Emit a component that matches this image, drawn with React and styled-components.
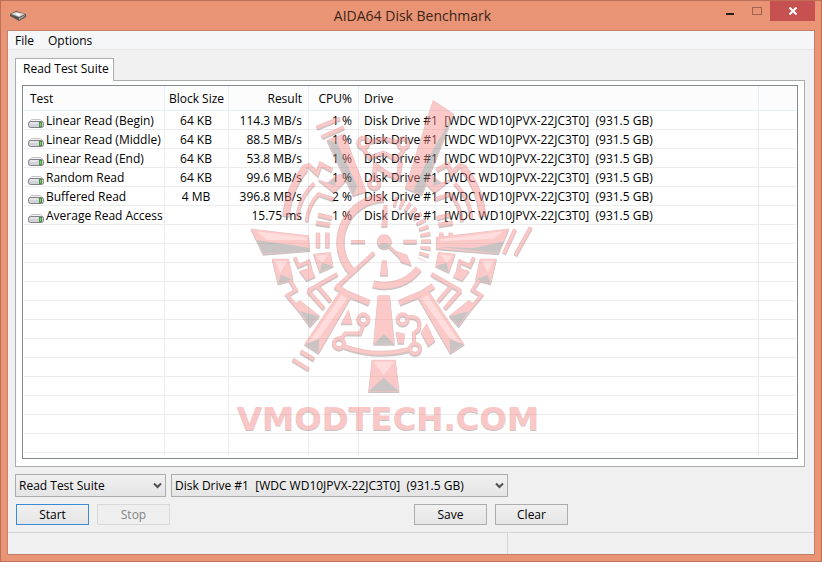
import React from 'react';
import styled, { createGlobalStyle } from 'styled-components';

const DISK = 'Disk Drive #1\u00a0 [WDC WD10JPVX-22JC3T0]\u00a0 (931.5 GB)';

const rows = [
  { test: 'Linear Read (Begin)', block: '64 KB', result: '114.3 MB/s', cpu: '1 %' },
  { test: 'Linear Read (Middle)', block: '64 KB', result: '88.5 MB/s', cpu: '1 %' },
  { test: 'Linear Read (End)', block: '64 KB', result: '53.8 MB/s', cpu: '1 %' },
  { test: 'Random Read', block: '64 KB', result: '99.6 MB/s', cpu: '1 %' },
  { test: 'Buffered Read', block: '4 MB', result: '396.8 MB/s', cpu: '2 %' },
  { test: 'Average Read Access', block: '', result: '15.75 ms', cpu: '1 %' },
];

const columns = [141, 64, 80, 50, 400];

// vertical grid lines run below the last row, so they are painted on the list
const columnLines = columns
  .map((width, i) => columns.slice(0, i).reduce((a, b) => a + b, width))
  .map((end) => `linear-gradient(#ececec, #ececec) ${end - 1}px 0 / 1px 100% no-repeat`)
  .join(', ');

// watermark parts, every "side" part is drawn again mirrored
const sidePolys = [
  '98,520 145,520 158,580 115,592',
  '222,505 270,500 278,540 240,557',
  '162,655 180,645 237,690 210,720',
  '300,618 330,636 235,800 195,775',
  '236,282 262,292 288,270 314,262 316,284 282,318',
  '180,556 212,546 224,572 200,582',
];

const sideBars = [
  { d: 'M138 390 Q146 306 196 246', w: 22 },
  { d: 'M188 244 L206 238 L232 262 L242 234 L276 252', w: 13 },
  { d: 'M172 398 Q176 336 222 292', w: 11 },
  { d: 'M200 406 Q204 356 236 324 L282 340', w: 11 },
  { d: 'M234 386 L276 396', w: 13 },
  { d: 'M228 410 L270 416', w: 13 },
  { d: 'M234 440 L234 484', w: 13 },
  { d: 'M262 440 L262 484', w: 13 },
  { d: 'M148 580 L168 612 L142 628 L172 664', w: 11 },
  { d: 'M164 514 L176 540 L206 526 L212 552', w: 11 },
  { d: 'M204 614 L292 564', w: 12 },
  { d: 'M204 614 L252 668', w: 12 },
  { d: 'M234 602 L272 646', w: 12 },
  { d: 'M286 600 L320 622 L388 650', w: 18 },
];

const polys = [
  '35,430 205,450 208,492 70,503',
  '590,455 805,430 775,502 590,487',
  '262,163 312,145 377,315 340,327',
  '580,45 640,85 545,325 497,305',
  '415,630 448,630 462,773 402,773',
  '397,823 465,823 476,915 387,915',
  '325,675 335,712 305,712',
  '470,740 492,744 490,770 475,770',
  '545,740 560,715 583,765 565,778',
  '472,498 500,508 512,536 484,526',
  '428,525 438,525 442,566 422,566',
  '433,360 440,360 440,420 426,420',
];

const bars = [
  { d: 'M230 125 L300 97', w: 12 },
  { d: 'M245 153 L312 124', w: 12 },
  { d: 'M825 430 L792 502', w: 12 },
  { d: 'M872 424 L826 507', w: 12 },
  { d: 'M182 796 L222 820', w: 12 },
  { d: 'M158 820 L206 850', w: 12 },
  { d: 'M432 336 A132 132 0 0 0 335 556', w: 24 },
  { d: 'M402 500 L292 602', w: 12 },
  { d: 'M400 594 A128 128 0 0 0 536 548', w: 22 },
  { d: 'M333 467 L375 467', w: 10 },
  { d: 'M490 467 L530 467', w: 12 },
  { d: 'M440 474 L484 516', w: 9 },
  { d: 'M370 188 L388 214 L430 200 L470 220 L492 190', w: 12 },
  { d: 'M386 168 L430 158 L474 168', w: 12 },
  { d: 'M403 274 L406 236 L440 262 L474 276 L482 226', w: 14 },
  { d: 'M370 718 L360 742 L316 742 L302 758', w: 11 },
  { d: 'M314 782 Q410 816 508 790', w: 14 },
  { d: 'M506 692 Q546 690 536 730 L522 742 L522 770', w: 12 },
];

const rings = [
  [370, 170],
  [490, 172],
  [403, 292],
  [370, 700],
  [297, 772],
  [488, 700],
  [525, 788],
];

const facets = [
  '50,462 160,478 208,486 208,494 70,503',
  '590,482 700,486 792,466 775,502',
  '262,163 290,168 352,300 340,327',
  '640,85 560,225 520,314 545,325',
  '402,773 432,745 462,773',
  '387,915 431,875 476,915',
  '195,775 238,760 235,800',
  '671,775 628,760 631,800',
  '115,592 122,566 158,580',
  '751,592 744,566 708,580',
  '240,557 246,530 278,540',
  '626,557 620,530 588,540',
  '180,676 237,690 210,720',
  '686,676 629,690 656,720',
  '240,284 262,294 288,272 286,300',
  '626,284 604,294 578,272 580,300',
];

const highlights = [
  '50,436 200,454 200,462 80,462',
  '790,436 600,460 600,466 760,458',
  '400,827 462,827 431,868',
  '104,524 141,524 122,560',
  '762,524 725,524 744,560',
  '227,509 266,505 246,530',
  '639,509 600,505 620,530',
  '304,628 320,638 238,755 206,770',
  '562,628 546,638 628,755 660,770',
];

const Shapes = ({ polyList, barList, tone, inset }) => (
  <>
    {polyList.map((points) => (
      <polygon key={points} points={points} fill={tone} stroke={tone} strokeWidth={inset ? 0 : 4} />
    ))}
    {barList.map(({ d, w }) => (
      <path key={d} d={d} fill="none" stroke={tone} strokeWidth={w - inset} />
    ))}
  </>
);

const Layer = ({ tone, inset = 0, dy = 0 }) => (
  <g transform={`translate(0 ${dy})`}>
    <Shapes polyList={polys} barList={bars} tone={tone} inset={inset} />
    <Shapes polyList={sidePolys} barList={sideBars} tone={tone} inset={inset} />
    <g transform="translate(866 0) scale(-1 1)">
      <Shapes polyList={sidePolys} barList={sideBars} tone={tone} inset={inset} />
    </g>
    <path
      d="M462 346 A124 124 0 0 1 546 520"
      fill="none"
      stroke={tone}
      strokeWidth={30 - inset}
      strokeDasharray="9 11"
    />
    {rings.map(([x, y]) => (
      <circle key={`${x}-${y}`} cx={x} cy={y} r="15" fill="none" stroke={tone} strokeWidth={12 - inset} />
    ))}
    <circle cx="433" cy="467" r={22 - inset / 2} fill={tone} />
  </g>
);

const Logo = () => (
  <Watermark viewBox="-15 0 930 1050" aria-hidden="true">
    <Layer tone="#8c7c7c" dy={4} />
    <Layer tone="#dd7a7a" />
    <Layer tone="#fa8a8a" inset={6} />
    {facets.map((points) => (
      <polygon key={points} points={points} fill="#8a8080" />
    ))}
    {highlights.map((points) => (
      <polygon key={points} points={points} fill="#ffb4b4" />
    ))}
    <ellipse cx="433" cy="479" rx="17" ry="8" fill="#8a8080" />
    <WatermarkText x="-9" y="1036" fill="#857c7c">VMODTECH.COM</WatermarkText>
    <WatermarkText x="-9" y="1032" fill="#f58484">VMODTECH.COM</WatermarkText>
  </Watermark>
);

const AppIcon = () => (
  <svg width="16" height="16" viewBox="0 0 16 16" aria-hidden="true">
    <path d="M0 6 L6 3 L16 6 L16 9 L9 13 L0 8Z" fill="#5d5552" />
    <path d="M1 6 L6 4 L15 6 L9 9Z" fill="#d9d7d5" />
    <path d="M5 5 L9 5 L11 7 L8 8Z" fill="#f8f8f8" />
    <path d="M9 10 L15 7 L15 8 L9 12Z" fill="#a8a4a2" />
  </svg>
);

const DriveIcon = () => (
  <svg width="16" height="12" viewBox="0 0 16 12" aria-hidden="true">
    <path d="M3.500 2.500 H12.500 L15 5 H1Z" fill="#f3f3f3" stroke="#c4c4c4" />
    <rect x="0.5" y="4.5" width="15" height="6" rx="2" fill="#d2d2da" stroke="#808086" />
    <path d="M2 6 H10" stroke="#f6f6f8" />
    <rect x="11" y="5" width="3" height="5" fill="#4c9445" />
    <path d="M12.500 6 V9" stroke="#7fd067" />
  </svg>
);

const Chevron = () => (
  <ChevronIcon viewBox="0 0 9 7" aria-hidden="true">
    <path d="M1 1.500 L4.500 5 L8 1.500" fill="none" stroke="#505050" strokeWidth="2" />
  </ChevronIcon>
);

const Combo = ({ label, value, width }) => (
  <ComboBox $width={width}>
    <Select aria-label={label} defaultValue={value}>
      <option>{value}</option>
    </Select>
    <Chevron />
  </ComboBox>
);

const App = () => {
  return (
    <Window>
      <GlobalStyle />
      <TitleBar>
        <AppIcon />
        <Title>AIDA64 Disk Benchmark</Title>
        <WindowControls>
          <ControlButton aria-label="Minimize">
            <svg width="8" height="10" viewBox="0 0 8 10">
              <rect y="7" width="8" height="2" fill="#2b1a14" />
            </svg>
          </ControlButton>
          <ControlButton aria-label="Maximize" disabled>
            <svg width="10" height="8" viewBox="0 0 10 8">
              <rect x="0.5" y="0.5" width="9" height="7" fill="none" stroke="#a0634d" />
            </svg>
          </ControlButton>
          <CloseButton aria-label="Close">
            <svg width="8" height="8" viewBox="0 0 8 8">
              <path d="M0.500 0.500 L7.500 7.500 M7.500 0.500 L0.500 7.500" stroke="#fff" strokeWidth="2" />
            </svg>
          </CloseButton>
        </WindowControls>
      </TitleBar>
      <Client>
        <MenuBar>
          <MenuItem>File</MenuItem>
          <MenuItem>Options</MenuItem>
        </MenuBar>
        <Content>
          <Tab role="tab" aria-selected="true">Read Test Suite</Tab>
          <TabPage>
            <List>
              <Table>
                <colgroup>
                  {columns.map((width, i) => (
                    <Column key={i} $width={width} />
                  ))}
                  <col />
                </colgroup>
                <thead>
                  <tr>
                    <HeadCell $left={6}>Test</HeadCell>
                    <HeadCell $align="center">Block Size</HeadCell>
                    <HeadCell $align="right">Result</HeadCell>
                    <HeadCell $align="right">CPU%</HeadCell>
                    <HeadCell $left={5}>Drive</HeadCell>
                    <HeadCell />
                  </tr>
                </thead>
                <tbody>
                  {rows.map((row) => (
                    <tr key={row.test}>
                      <Cell $left={4}>
                        <TestName>
                          <DriveIcon />
                          {row.test}
                        </TestName>
                      </Cell>
                      <Cell $align="center">{row.block}</Cell>
                      <Cell $align="right">{row.result}</Cell>
                      <Cell $align="right">{row.cpu}</Cell>
                      <Cell $left={5}>{DISK}</Cell>
                      <Cell />
                    </tr>
                  ))}
                </tbody>
              </Table>
              <Logo />
            </List>
          </TabPage>
          <ComboRow>
            <Combo label="Test" value="Read Test Suite" width={151} />
            <Combo label="Drive" value={DISK} width={337} />
          </ComboRow>
          <ButtonRow>
            <ButtonGroup>
              <Button $primary>Start</Button>
              <Button disabled>Stop</Button>
            </ButtonGroup>
            <ButtonGroup>
              <Button>Save</Button>
              <Button>Clear</Button>
            </ButtonGroup>
          </ButtonRow>
        </Content>
        <StatusBar>
          <StatusPane />
        </StatusBar>
      </Client>
    </Window>
  );
}

const GlobalStyle = createGlobalStyle`
  * {
    box-sizing: border-box;
  }

  body {
    margin: 0;
    color: #000;
    font: 12px/16px 'Open Sans', 'Noto Sans', sans-serif;
  }

  button, select {
    font: inherit;
    color: inherit;
  }
`;

const Window = styled.div`
  display: flex;
  flex-direction: column;
  min-height: 100vh;
  padding: 0 6px 6px;
  border: 1px solid #bd6f58;
  background: #e99474;
`;

const TitleBar = styled.header`
  display: grid;
  grid-template-columns: 1fr auto 1fr;
  align-items: center;
  height: 29px;
  padding-left: 3px;
`;

const Title = styled.h1`
  margin: 0;
  color: #3c2419;
  font-size: 14px;
  font-weight: 400;
  line-height: 28px;
`;

const WindowControls = styled.div`
  display: flex;
  align-self: start;
  justify-content: flex-end;
`;

const ControlButton = styled.button`
  display: flex;
  align-items: center;
  justify-content: center;
  width: 27px;
  height: 20px;
  padding: 0;
  border: 0;
  background: none;
`;

const CloseButton = styled(ControlButton)`
  width: 45px;
  background: #c75050;
`;

const Client = styled.main`
  display: flex;
  flex: 1;
  flex-direction: column;
  border: 1px solid #c27f69;
  background: #f0f0f0;
`;

const MenuBar = styled.nav`
  display: flex;
  height: 19px;
  border-bottom: 1px solid #e6e6e6;
  background: #f5f6f7;
`;

const MenuItem = styled.button`
  padding: 2px 7px 0;
  border: 0;
  background: none;
  line-height: 16px;
`;

const Content = styled.div`
  display: flex;
  flex: 1;
  flex-direction: column;
  gap: 7px;
  padding: 8px 9px 7px 7px;
`;

const Tab = styled.button`
  z-index: 1;
  align-self: flex-start;
  height: 23px;
  margin-bottom: -8px;
  padding: 0 4px 2px 7px;
  border: 1px solid #acacac;
  border-bottom: 0;
  background: #fff;
`;

const TabPage = styled.section`
  display: flex;
  flex: 1;
  padding: 4px 6px 7px;
  border: 1px solid #acacac;
  background: #fff;
`;

const List = styled.div`
  position: relative;
  flex: 1;
  min-width: 0;
  padding: 0 1px 2px;
  border: 1px solid #828790;
  background:
    ${columnLines},
    repeating-linear-gradient(transparent 0 18px, #ececec 18px 19px) 0 25px no-repeat;
  background-origin: content-box;
  background-clip: content-box;
`;

const Table = styled.table`
  width: 100%;
  table-layout: fixed;
  border-spacing: 0;
`;

const Column = styled.col`
  width: ${({ $width }) => $width}px;
`;

const HeadCell = styled.th`
  height: 25px;
  padding: 2px 0 0 ${({ $left = 0 }) => $left}px;
  padding-right: ${({ $align }) => ($align === 'right' ? 6 : 0)}px;
  border-right: 1px solid #e3eef5;
  border-bottom: 1px solid #e3eef5;
  background: #fcfcfc;
  font-weight: 400;
  text-align: ${({ $align = 'left' }) => $align};
  white-space: nowrap;

  &:last-child {
    border-right: 0;
  }
`;

const Cell = styled.td`
  height: 19px;
  padding: 0 0 0 ${({ $left = 0 }) => $left}px;
  padding-right: ${({ $align }) => ({ right: 7, center: 2 })[$align] || 0}px;
  text-align: ${({ $align = 'left' }) => $align};
  white-space: nowrap;
`;

const TestName = styled.div`
  display: flex;
  align-items: flex-end;
  gap: 2px;
`;

const Watermark = styled.svg`
  position: absolute;
  top: 0;
  left: 212px;
  width: 310px;
  height: 350px;
  overflow: visible;
  opacity: 0.45;
  pointer-events: none;
`;

const WatermarkText = styled.text`
  font: 700 97px 'DejaVu Sans', sans-serif;
`;

const ComboRow = styled.div`
  display: flex;
  gap: 5px;
`;

const ComboBox = styled.div`
  position: relative;
  width: ${({ $width }) => $width}px;
`;

const Select = styled.select`
  display: block;
  width: 100%;
  height: 23px;
  padding: 0 20px 0 3px;
  border: 1px solid #acacac;
  border-radius: 0;
  background: linear-gradient(#f0f0f0, #e5e5e5);
  appearance: none;
`;

const ChevronIcon = styled.svg`
  position: absolute;
  top: 8px;
  right: 4px;
  width: 9px;
  height: 7px;
  pointer-events: none;
`;

const ButtonRow = styled.div`
  display: flex;
  justify-content: space-between;
  max-width: 553px;
  padding-left: 1px;
`;

const ButtonGroup = styled.div`
  display: flex;
  gap: 8px;
`;

const Button = styled.button`
  width: 73px;
  height: 21px;
  padding: 0;
  border: 1px solid ${({ $primary }) => ($primary ? '#3c8ad6' : '#acacac')};
  background: linear-gradient(#f0f0f0, #e5e5e5);

  &:disabled {
    border-color: #d9d9d9;
    background: #efefef;
    color: #838383;
  }
`;

const StatusBar = styled.footer`
  display: flex;
  height: 22px;
  border-top: 1px solid #d7d7d7;
`;

const StatusPane = styled.div`
  width: 500px;
  border-right: 1px solid #d7d7d7;
`;

export default App;
